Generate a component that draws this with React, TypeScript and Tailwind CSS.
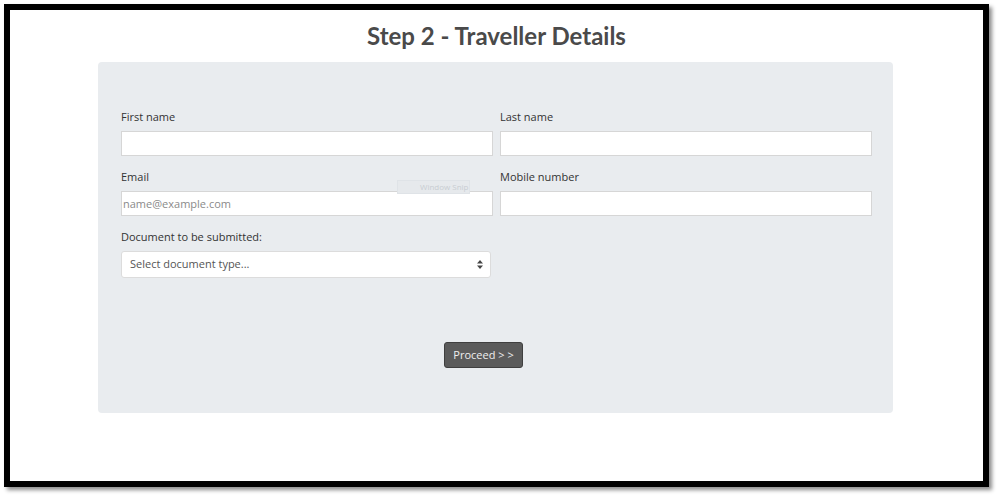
export default function App() {
  const font = { fontFamily: '"Open Sans", "Noto Sans", sans-serif' };
  return (
    <div className="w-[1002px] h-[500px] bg-white pt-[4px] pl-[4px]" style={font}>
      <div className="relative w-[985px] h-[483px] border-[6px] border-black bg-white shadow-[3px_3px_4px_rgba(0,0,0,0.45)]">
        <h1 className="mt-[10px] text-center text-[24px] leading-[32px] font-bold text-[#4a4a4a] font-['Lato',sans-serif]">
          Step 2 - Traveller Details
        </h1>
        <div className="mt-[10px] ml-[88px] w-[795px] h-[351px] rounded-[4px] bg-[#e9ecef] pt-[46px] pl-[23px] pr-[21px]">
          <div className="grid grid-cols-2 gap-x-[7px]">
            <div>
              <label className="block text-[11px] leading-[18px] text-[#333] mb-[5px]">First name</label>
              <input className="block w-full h-[25px] bg-white border border-[#d6d6d6] text-[11px] px-[2px]" />
            </div>
            <div>
              <label className="block text-[11px] leading-[18px] text-[#333] mb-[5px]">Last name</label>
              <input className="block w-full h-[25px] bg-white border border-[#d6d6d6] text-[11px] px-[2px]" />
            </div>
            <div className="mt-[12px]">
              <label className="block text-[11px] leading-[18px] text-[#333] mb-[5px]">Email</label>
              <input
                placeholder="name@example.com"
                className="block w-full h-[25px] bg-white border border-[#d6d6d6] text-[11px] px-[1px] placeholder:text-[#8a8a8a]"
              />
            </div>
            <div className="mt-[12px]">
              <label className="block text-[11px] leading-[18px] text-[#333] mb-[5px]">Mobile number</label>
              <input className="block w-full h-[25px] bg-white border border-[#d6d6d6] text-[11px] px-[2px]" />
            </div>
          </div>
          <div className="mt-[12px]">
            <label className="block text-[11px] leading-[18px] text-[#333] mb-[5px]">Document to be submitted:</label>
            <div className="flex items-center justify-between w-[370px] h-[27px] bg-white border border-[#dcdcdc] rounded-[3px] pl-[8px] pr-[7px] text-[11px] text-[#555]">
              <span>Select document type...</span>
              <svg width="6" height="9" viewBox="0 0 6 9">
                <path d="M3 0 L6 3.5 L0 3.5 Z M3 9 L6 5.5 L0 5.5 Z" fill="#444" />
              </svg>
            </div>
          </div>
          <div className="mt-[63px] pl-[323px]">
            <button className="w-[79px] h-[26px] rounded-[3px] bg-[#5b5b5b] border border-[#3f3f3f] text-[11px] text-[#eee]">
              Proceed &gt; &gt;
            </button>
          </div>
        </div>
        <div className="absolute left-[387px] top-[170px] w-[73px] h-[14px] border border-[#dfe3e7] bg-[#e6e9ec] text-[8px] leading-[12px] text-[#c8cdd2] pl-[22px]">
          Window Snip
        </div>
      </div>
    </div>
  );
}
